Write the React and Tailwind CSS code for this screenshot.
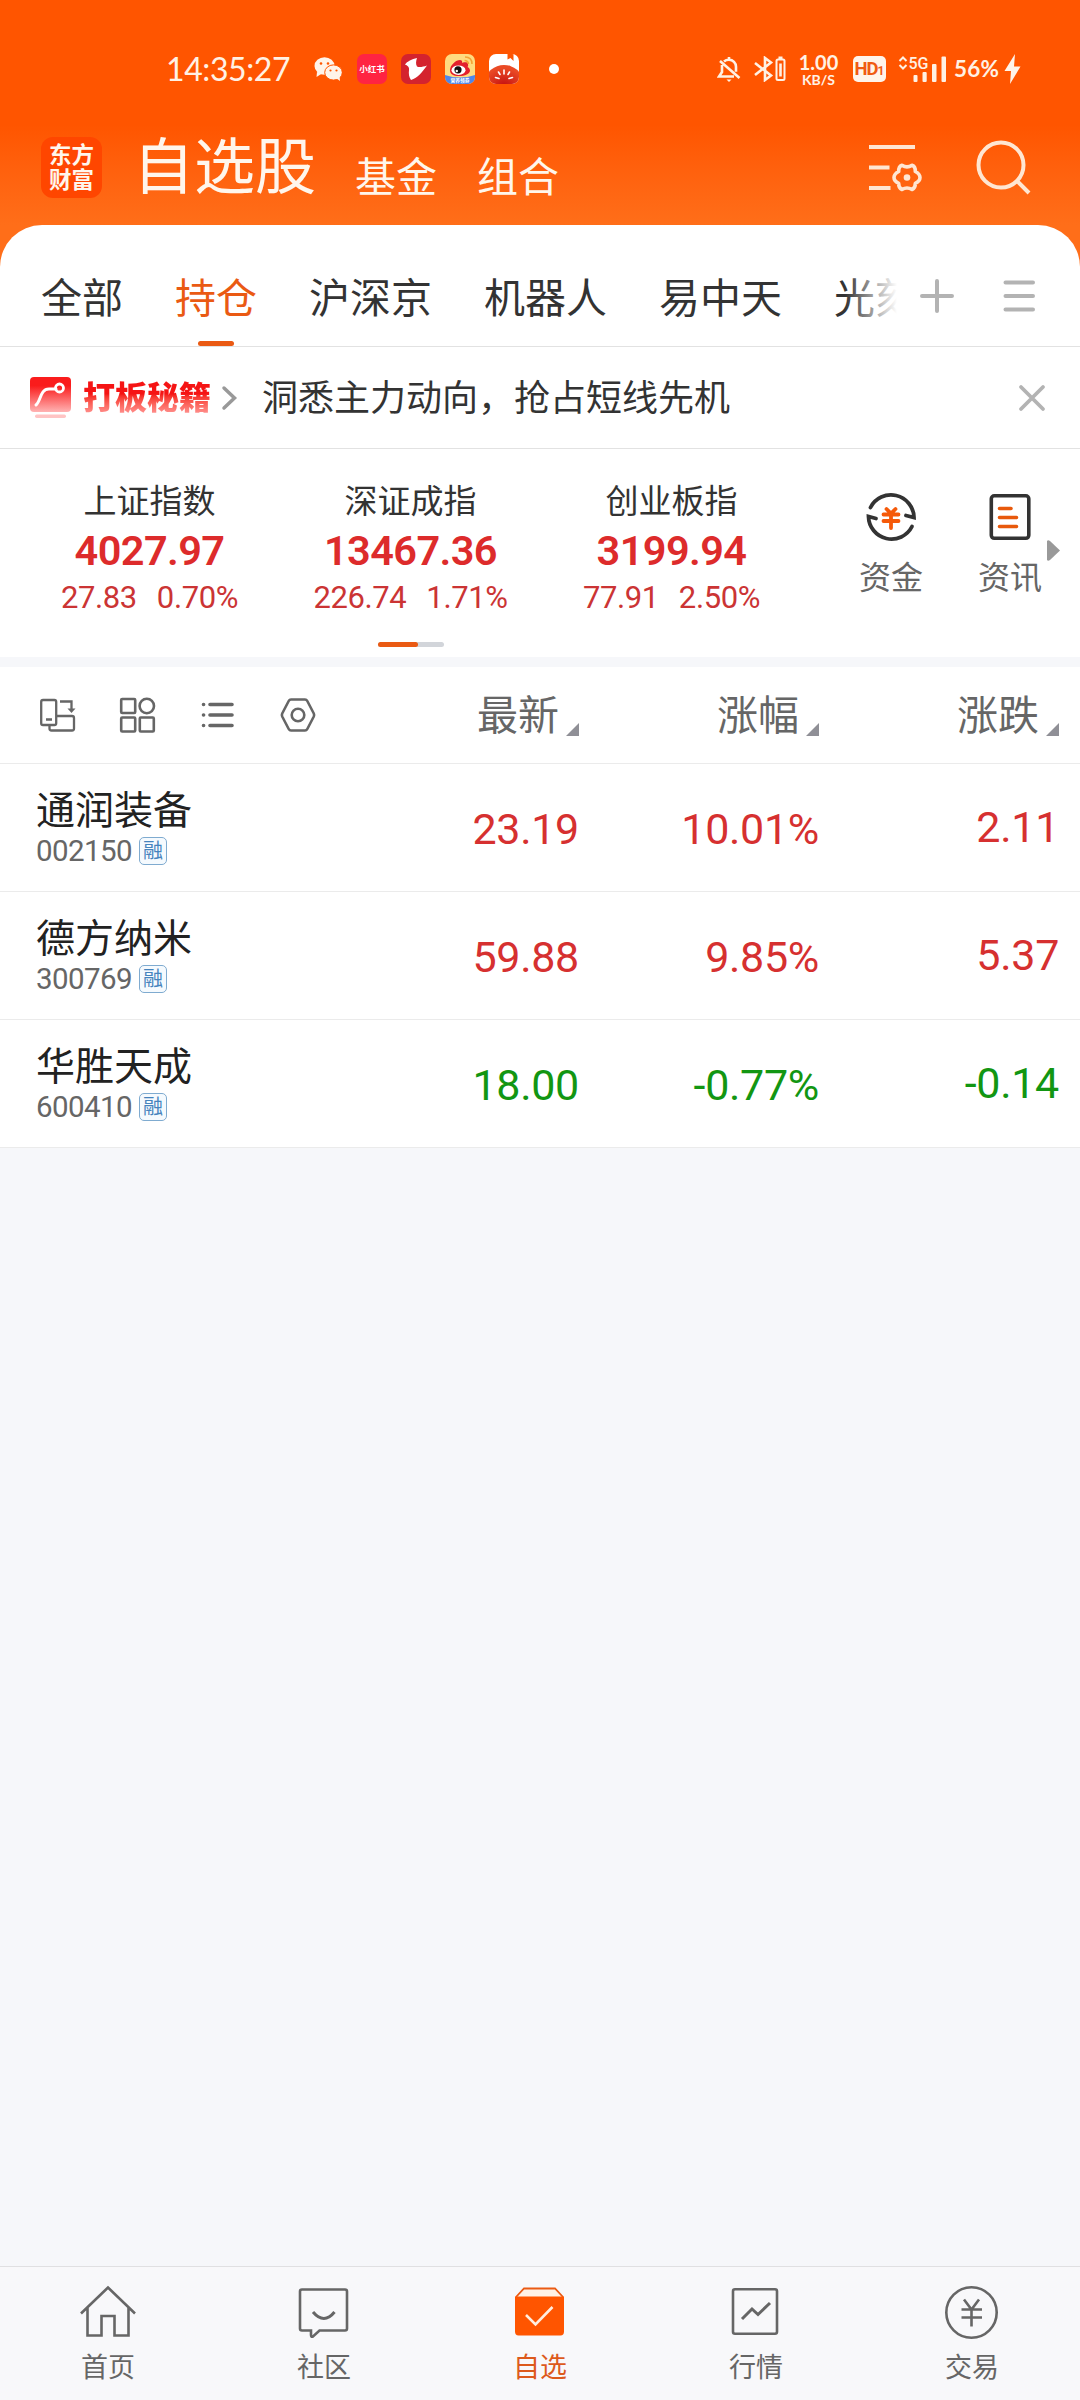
import React, { useState } from 'react'

const groups = ["全部", "持仓", "沪深京", "机器人", "易中天", "光刻机"]

const indices = [
    { name: "上证指数", value: "4027.97", change: "27.83", percent: "0.70%" },
    { name: "深证成指", value: "13467.36", change: "226.74", percent: "1.71%" },
    { name: "创业板指", value: "3199.94", change: "77.91", percent: "2.50%" },
]

const columns = ["最新", "涨幅", "涨跌"]

const stocks = [
    { name: "通润装备", code: "002150", price: "23.19", percent: "10.01%", change: "2.11", up: true },
    { name: "德方纳米", code: "300769", price: "59.88", percent: "9.85%", change: "5.37", up: true },
    { name: "华胜天成", code: "600410", price: "18.00", percent: "-0.77%", change: "-0.14", up: false },
]

const StatusBar = () => {
    return (
        <div className="h-[125px] pt-[47px] flex items-start text-[#fff1e4]">
            <div className="h-11 w-full flex items-center">
                <span className="ml-[166px] w-[148px] font-['Lato',sans-serif] text-[32px] leading-none tracking-[-0.4px]">14:35:27</span>

                {/* wechat */}
                <svg className="w-7 h-6" viewBox="0 0 28 24" fill="none">
                    <ellipse cx="10.5" cy="9" rx="10" ry="8.7" fill="#fff4ea" />
                    <path d="M3 15 2.5 20 8 16.500z" fill="#fff4ea" />
                    <ellipse cx="19.500" cy="15.500" rx="8.800" ry="7.600" fill="#fff4ea" stroke="#ff5500" strokeWidth="1" />
                    <path d="M22 21 26 24 25.500 19z" fill="#fff4ea" />
                    <circle cx="7" cy="6.500" r="1.300" fill="#ff5500" />
                    <circle cx="14" cy="6.500" r="1.300" fill="#ff5500" />
                    <circle cx="16.500" cy="13.500" r="1.100" fill="#ff5500" />
                    <circle cx="22.500" cy="13.500" r="1.100" fill="#ff5500" />
                </svg>

                <div className="ml-[15px] w-[30px] h-[30px] rounded-[7px] bg-[#ff2442] flex items-center justify-center">
                    <span className="text-white text-[8.500px] leading-none font-bold whitespace-nowrap">小红书</span>
                </div>

                <svg className="ml-3.5 w-[30px] h-[30px]" viewBox="0 0 30 30">
                    <rect width="30" height="30" rx="7" fill="#d4232e" />
                    <path d="M16 4C11 5 6 7.500 4 10.500 6.500 11.500 8.500 13 8 16 7.500 20 8 23 10 26 17 24 21 18 26 11.500 22 13 18 13.500 16 12.500 14.500 10 15 7 16 4z" fill="#fff" />
                </svg>

                {/* weibo */}
                <svg className="ml-3.5 w-[30px] h-[30px]" viewBox="0 0 30 30">
                    <defs>
                        <clipPath id="weibo"><rect width="30" height="30" rx="7" /></clipPath>
                    </defs>
                    <g clipPath="url(#weibo)">
                        <rect width="30" height="30" fill="#ffdb80" />
                        <path d="M0 21Q15 26 30 21V30H0z" fill="#4f86ea" />
                        <path d="M5 16c0-5 6-10 10-10 3 0 2 3 2 3s5-2 6 1c.6 2-.5 3-.5 3s2.500 1 2.500 3.500C25 20 20 22 14 22S5 20 5 16z" fill="#e3202c" />
                        <ellipse cx="13.500" cy="16.200" rx="7" ry="4.800" fill="#fff" />
                        <circle cx="13" cy="15.800" r="3.600" fill="#111" />
                        <circle cx="11.800" cy="17" r="1.200" fill="#fff" />
                        <path d="M19.500 6.500q3.500 0 4 3.500M20 3q7 0 7 7" stroke="#f4a336" strokeWidth="1.600" fill="none" />
                        <text x="15" y="28.300" fontSize="4.800" fontWeight="700" fill="#fff" textAnchor="middle">营养领券</text>
                    </g>
                </svg>

                {/* tomato */}
                <svg className="ml-3.5 w-[30px] h-[30px]" viewBox="0 0 30 30">
                    <defs>
                        <clipPath id="tomato"><rect width="30" height="30" rx="7" /></clipPath>
                        <radialGradient id="tomatoRed" cx=".5" cy=".7" r=".6">
                            <stop offset="0" stopColor="#c40f10" />
                            <stop offset="1" stopColor="#ea4a25" />
                        </radialGradient>
                    </defs>
                    <g clipPath="url(#tomato)">
                        <rect width="30" height="30" fill="#fff" />
                        <path d="M18.500 0V5.500L21.500 4 24.500 7V0z" fill="#ff5500" />
                        <ellipse cx="15" cy="26" rx="18" ry="15" fill="url(#tomatoRed)" />
                        <path d="M15 16v4M9.500 18l1.500 2.500M20.500 18l-1.500 2.500M6.500 23.500l3.500 1M23.500 23.500l-3.500 1" stroke="#fff" strokeWidth="1.600" strokeLinecap="round" />
                    </g>
                </svg>

                <span className="ml-[30px] w-2.5 h-2.5 rounded-full bg-white"></span>

                {/* muted bell */}
                <svg className="ml-[158px] w-6 h-[26px]" viewBox="0 0 24 26" fill="none" stroke="currentColor" strokeWidth="2.600">
                    <path d="M7 5.500Q9 3.800 12 3.800c4 0 7 3 7 7v5M5 9V16l-3 4.500H17M12 1V4M3 5 22.500 22" />
                    <path d="M9.500 23.500h5L12 26z" fill="currentColor" stroke="none" />
                </svg>

                <svg className="ml-[13px] w-8 h-[26px]" viewBox="0 0 32 26" fill="none" stroke="currentColor" strokeWidth="2.600">
                    <path d="M1 7 17 19.500 11 24V2L17 6.500 1 19" />
                    <rect x="22.500" y="3.500" width="8" height="20.500" rx="1.500" strokeWidth="2" />
                    <path d="M26.500 7.500V20.500" strokeWidth="2.600" />
                    <path d="M24.500 1.800h4" />
                </svg>

                <div className="ml-3 w-[41px] flex flex-col items-center font-['Lato',sans-serif] font-bold">
                    <span className="text-[20px] leading-[20px]">1.00</span>
                    <span className="text-[14px] leading-[15px]">KB/S</span>
                </div>

                <div className="ml-3.5 w-[33px] h-[26px] rounded-[5px] bg-[#fff4ea] flex items-center justify-center text-[#f05a12] font-bold leading-none">
                    <span className="text-[18.500px] tracking-[-1px]">HD</span>
                    <span className="text-[12px] pt-1">1</span>
                </div>

                <svg className="ml-3 w-[50px] h-[30px] font-['Roboto']" viewBox="0 -1 50 30" fill="currentColor">
                    <path d="M1.500 6 5 2.500 8.500 6M1.500 10 5 13.500 8.500 10" fill="none" stroke="currentColor" strokeWidth="2" />
                    <text x="10.500" y="14" fontSize="16" fontWeight="500">5G</text>
                    <rect x="15.500" y="20" width="4" height="7" rx="1" />
                    <rect x="24.500" y="17" width="4.200" height="10" rx="1" />
                    <rect x="34" y="9" width="4.500" height="18" rx="1" />
                    <rect x="43.500" y="1.500" width="4.500" height="25.500" rx="1" />
                </svg>

                <span className="ml-[6px] w-[47px] font-['Lato',sans-serif] font-bold text-[22.500px] leading-none tracking-[0.2px]">56%</span>
                <svg className="ml-[3px] w-[17px] h-[30px]" viewBox="0 0 16 30" fill="#fff4ea">
                    <path d="M10.500 0 0 17H6.500L5.500 30 16 12.500H9.500z" />
                </svg>
            </div>
        </div>
    )
}

const TitleBar = () => {
    return (
        <div className="h-[100px] flex items-start text-[#fff6ec]">
            <div className="ml-[41px] mt-3 w-[61px] h-[61px] rounded-[12px] bg-[#ff4600] flex flex-col items-center justify-center text-[22.500px] leading-[25px] font-bold">
                <span>东方</span>
                <span>财富</span>
            </div>
            <h1 className="ml-[31px] mt-[13px] w-[183px] text-[61px] leading-[60px]">自选股</h1>
            <span className="ml-[39px] mt-[32px] text-[41px] leading-[42px]">基金</span>
            <span className="ml-[40px] mt-[32px] text-[41px] leading-[42px]">组合</span>

            <svg className="ml-auto mt-[18px] w-[54px] h-[50px]" viewBox="0 0 54 50" fill="none" stroke="#ffe6d2" strokeWidth="4">
                <path d="M1 4H47M1 24.500H21.500M1 45H22.500" />
                <path
                    d="M34 22.300Q39 25.500 44 22.300Q47.500 23.500 47.300 28.500Q52 31 52 34.500Q52 38 47.300 40.300Q47.500 45 44 46.500Q39 43.500 34 46.500Q30.500 45 30.700 40.300Q26 38 26 34.500Q26 31 30.700 28.500Q30.500 23.500 34 22.300Z"
                    strokeWidth="3.600"
                    strokeLinejoin="round"
                />
                <circle cx="39" cy="34.500" r="3.300" fill="#ffe6d2" stroke="none" />
            </svg>
            <svg className="ml-[54px] mr-[49px] mt-[14px] w-[55px] h-[56px]" viewBox="0 0 55 56" fill="none" stroke="#ffe6d2" strokeWidth="4">
                <circle cx="25" cy="26" r="22.500" />
                <path d="M41 42 53 54" />
            </svg>
        </div>
    )
}

const GroupTabs = ({ active, setActive }) => {
    return (
        <div className="h-[122px] border-b border-[#e2e2e2] flex">
            <div className="relative w-[897px] overflow-hidden flex gap-[52px] pl-[41px] text-[41px] text-[#333]">
                {groups.map((g) => (
                    <div
                        key={g}
                        onClick={() => setActive(g)}
                        className={`shrink-0 flex flex-col items-center cursor-pointer ${active === g ? "text-[#ea5a13]" : ""}`}
                    >
                        <span className="mt-[53px] leading-[42px]">{g}</span>
                        {active === g && <span className="mt-[21px] w-9 h-[5px] rounded-full bg-[#ea5a13]"></span>}
                    </div>
                ))}
                {/* fades the last group out under the buttons */}
                <div className="absolute right-0 top-0 w-[52px] h-full bg-linear-to-r from-white/0 to-white"></div>
            </div>
            <svg className="ml-[22px] mt-[53px] w-9 h-9" viewBox="0 0 36 36" stroke="#b3b3b3" strokeWidth="4" strokeLinecap="round">
                <path d="M3 18H33M18 3V33" />
            </svg>
            <svg className="ml-[47px] mt-[53px] w-9 h-9" viewBox="0 0 36 36" stroke="#b3b3b3" strokeWidth="4" strokeLinecap="round">
                <path d="M3.500 4.500H31M3.500 18H31M3.500 31.500H31" />
            </svg>
        </div>
    )
}

const Banner = () => {
    return (
        <div className="h-[102px] border-b border-[#e2e2e2] flex items-center">
            <svg className="ml-[30px] w-[41px] h-[42px]" viewBox="0 0 41 42" fill="none">
                <defs>
                    <linearGradient id="bannerRed" x1="0" y1="0" x2="0" y2="1">
                        <stop offset=".25" stopColor="#fa1c1c" />
                        <stop offset="1" stopColor="#ffb3b3" />
                    </linearGradient>
                </defs>
                <rect width="41" height="35" rx="4" fill="url(#bannerRed)" />
                <path d="M6 28C11 24 10 12 19 12H26" stroke="#fff" strokeWidth="3" strokeLinecap="round" />
                <circle cx="29.500" cy="11" r="4" stroke="#fff" strokeWidth="2.800" />
                <rect x="5" y="37.500" width="31" height="3.500" rx="1.700" fill="#ffc4c4" />
            </svg>
            <span className="ml-[12px] text-[32px] leading-[40px] font-black bg-linear-to-b from-[#f51414] from-40% to-[#ff9a9a] to-95% bg-clip-text text-transparent">打板秘籍</span>
            <svg className="ml-[9px] w-[18px] h-[26px]" viewBox="0 0 18 26" fill="none" stroke="#999" strokeWidth="3.500" strokeLinecap="round">
                <path d="M4 3 14.500 13 4 23" />
            </svg>
            <span className="ml-[24px] mt-0.5 text-[36px] leading-[40px] text-[#333]">洞悉主力动向，抢占短线先机</span>
            <svg className="ml-auto mr-[34px] w-7 h-7" viewBox="0 0 28 28" stroke="#b3b3b3" strokeWidth="3.800" strokeLinecap="round">
                <path d="M3 3 25 25M25 3 3 25" />
            </svg>
        </div>
    )
}

const IndexBoard = () => {
    return (
        <div className="h-[208px] flex">
            <div className="ml-[19px] w-[783px] flex flex-col items-center">
                <div className="w-full h-[193px] grid grid-cols-3">
                    {indices.map((item) => (
                        <div key={item.name} className="pt-[35px] flex flex-col items-center">
                            <span className="text-[33px] leading-[36px] text-[#333]">{item.name}</span>
                            <span className="mt-[10px] text-[41.500px] leading-[42px] font-semibold tracking-[-0.6px] text-[#dd2b2b]">{item.value}</span>
                            <span className="mt-[10px] flex gap-[20px] text-[31px] leading-[32px] tracking-[-0.4px] text-[#cb3434]">
                                <span>{item.change}</span>
                                <span>{item.percent}</span>
                            </span>
                        </div>
                    ))}
                </div>
                <div className="w-[66px] h-[5px] rounded-full bg-[#d2d5da]">
                    <div className="w-10 h-full rounded-full bg-[#ea5a13]"></div>
                </div>
            </div>

            <div className="ml-[57px] pt-[42px] flex flex-col items-center text-[32px] text-[#666]">
                <svg className="w-[52px] h-[52px]" viewBox="0 0 52 52" fill="none" stroke="#333" strokeWidth="3.800" strokeLinecap="round">
                    <path d="M5.500 16.500A23 23 0 0 1 49 26.500L41 24.500" />
                    <path d="M47 35.500A23 23 0 0 1 3.500 25.500L11 27.500" />
                    <g stroke="#f55a0a">
                        <path d="M21.500 18 26 22.500 30.500 18M18.500 23.500H33.500M18.500 30H33.500M26 23V37" />
                    </g>
                </svg>
                <span className="mt-[15px] leading-[40px]">资金</span>
            </div>

            <div className="ml-[55px] pt-[42px] flex flex-col items-center text-[32px] text-[#666]">
                <svg className="w-[52px] h-[52px]" viewBox="0 0 52 52" fill="none" stroke="#333" strokeWidth="3.600" strokeLinecap="round">
                    <rect x="7.300" y="4.800" width="37.500" height="42.500" rx="3" />
                    <path d="M15.500 17.500H27M15.500 26.500H32.500M15.500 35.500H32.500" stroke="#e8590c" />
                </svg>
                <span className="mt-[15px] leading-[40px]">资讯</span>
            </div>
            <svg className="ml-[5px] mt-[91px] w-[13px] h-[21px]" viewBox="0 0 13 21" fill="#999">
                <path d="M0 1Q1-.5 3 1L13 10.500 3 20Q1 21.500 0 20z" />
            </svg>
        </div>
    )
}

const TableHead = () => {
    return (
        <div className="h-[97px] border-b border-[#ebebeb] flex items-center">
            <div className="w-[339px] pl-[39px] flex items-center gap-[42px]">
                <svg className="w-[38px] h-[38px]" viewBox="0 0 38 38" fill="none" stroke="#666" strokeWidth="2.300">
                    <rect x="2.200" y="4" width="15" height="25" rx="1.800" />
                    <path d="M7 23.500h6M10.500 29.500V32.500q0 2 2 2H33q2 0 2-2V22q0-2-2-2H17.500M21 5.500h11.500V15" />
                    <path d="M28.500 12.500h8L32.500 17z" fill="#666" stroke="none" />
                </svg>
                <svg className="w-[38px] h-[38px]" viewBox="0 0 38 38" fill="none" stroke="#666" strokeWidth="2.600">
                    <rect x="2.200" y="3" width="14" height="14" rx="1" />
                    <circle cx="27.800" cy="10" r="7.200" />
                    <rect x="2.200" y="21.500" width="14" height="14" rx="1" />
                    <rect x="20.800" y="21.500" width="14" height="14" rx="1" />
                </svg>
                <svg className="w-[38px] h-[38px]" viewBox="0 0 38 38" stroke="#666" strokeWidth="3.600" strokeLinecap="round">
                    <path d="M11 8.500H33M11 19H33M11 29.500H33M4.500 8.500h.1M4.500 19h.1M4.500 29.500h.1" />
                </svg>
                <svg className="w-[38px] h-[38px]" viewBox="0 0 38 38" fill="none" stroke="#666" strokeWidth="2.600" strokeLinejoin="round">
                    <path d="M12 3.500H26Q27.500 3.500 28.300 5L34.800 17.500Q35.500 19 34.800 20.500L28.300 33Q27.500 34.500 26 34.500H12Q10.500 34.500 9.700 33L3.200 20.500Q2.500 19 3.200 17.500L9.700 5Q10.500 3.500 12 3.500z" />
                    <circle cx="19" cy="19" r="6.300" />
                </svg>
            </div>
            {columns.map((col) => (
                <div key={col} className="w-[240px] flex justify-end items-end">
                    <span className="relative top-px text-[41px] leading-[42px] text-[#666]">{col}</span>
                    <svg className="ml-[7px] w-[13px] h-[13px]" viewBox="0 0 13 13" fill="#8f8f96">
                        <path d="M13 0V13H0z" />
                    </svg>
                </div>
            ))}
        </div>
    )
}

const StockRow = ({ stock }) => {
    return (
        <div className="h-[128px] border-b border-[#ebebeb] flex">
            <div className="w-[339px] pl-9 pt-[25px]">
                <div className="text-[39px] leading-[44px] text-[#222]">{stock.name}</div>
                <div className="mt-1 h-7 flex items-center">
                    <span className="w-[97px] text-[29.500px] leading-7 text-[#666] tracking-[-0.6px]">{stock.code}</span>
                    <span className="ml-[6px] w-7 h-7 rounded-[5px] border-[1.500px] border-[#7fabd0] bg-[#f5fafe] flex items-center justify-center text-[20px] leading-none text-[#4583bd]">融</span>
                </div>
            </div>
            <div className={`flex pt-[44px] text-[43px] leading-[42px] tracking-[-0.3px] text-right ${stock.up ? "text-[#d63030]" : "text-[#129612]"}`}>
                <span className="w-[240px]">{stock.price}</span>
                <span className="w-[240px]">{stock.percent}</span>
                <span className="w-[240px] -mt-0.5">{stock.change}</span>
            </div>
        </div>
    )
}

const NavItem = ({ label, active, children }) => {
    return (
        <div className={`flex-1 pt-[18px] flex flex-col items-center ${active ? "text-[#dd5a1c]" : "text-[#666]"}`}>
            <svg className="w-14 h-[54px]" viewBox="0 0 56 54" fill="none" stroke="#666" strokeWidth="2.600">
                {children}
            </svg>
            <span className="mt-[12px] text-[27px] leading-[34px]">{label}</span>
        </div>
    )
}

const BottomNav = () => {
    return (
        <div className="h-[134px] border-t border-[#e0e0e2] bg-[#f8f8fa] flex">
            <NavItem label="首页">
                <path d="M1 28.500 28 2.500 55 28.500M7.500 23V50.500H21.500V31H34.500V50.500H48.500V23" />
            </NavItem>
            <NavItem label="社区">
                <path d="M6 4.500H49Q51 4.500 51 6.500V43.500Q51 45.500 49 45.500H23.500L17 51.500Q15 52.500 15 50V45.500H6Q4 45.500 4 43.500V6.500Q4 4.500 6 4.500z" />
                <path d="M17 27Q28 40 38.500 27" strokeWidth="3" />
            </NavItem>
            <NavItem label="自选" active>
                <path d="M4 12 12 3.500H43L51 12" fill="#fff1e6" stroke="#ea5a13" strokeWidth="1.800" />
                <path d="M3 11.500H52V46.500Q52 50.500 48.500 50.500H6.500Q3 50.500 3 46.500z" fill="#ff5500" stroke="none" />
                <path d="M14 30 23.500 39.500 40.500 22" stroke="#ffeddf" />
            </NavItem>
            <NavItem label="行情">
                <rect x="5" y="4.200" width="44" height="44.500" rx="2" />
                <path d="M14 34 24 24 30 29.500 42 18" strokeWidth="3" />
            </NavItem>
            <NavItem label="交易">
                <circle cx="27.500" cy="27.500" r="25.200" />
                <path d="M20 14.500 27.500 24.500 35 14.500M17.500 24.500H38M17.500 32.500H38M27.500 24.500V41.500" />
            </NavItem>
        </div>
    )
}

const App = () => {

    const [active, setActive] = useState("持仓")

    return (
        <div className="w-[1080px] h-[2400px] flex flex-col bg-[#f6f7fa] font-['Roboto','Noto_Sans_CJK_SC',sans-serif]">
            <div className="bg-linear-to-b from-[#ff5500] from-[125px] to-[#ff6e19] to-[225px]">
                <StatusBar />
                <TitleBar />
                <div className="bg-white rounded-t-[42px]">
                    <GroupTabs active={active} setActive={setActive} />
                    <Banner />
                    <IndexBoard />
                </div>
            </div>

            <div className="mt-[10px] bg-white">
                <TableHead />
                {stocks.map((stock) => (
                    <StockRow key={stock.code} stock={stock} />
                ))}
            </div>

            <div className="flex-1"></div>
            <BottomNav />
        </div>
    )
}

export default App
